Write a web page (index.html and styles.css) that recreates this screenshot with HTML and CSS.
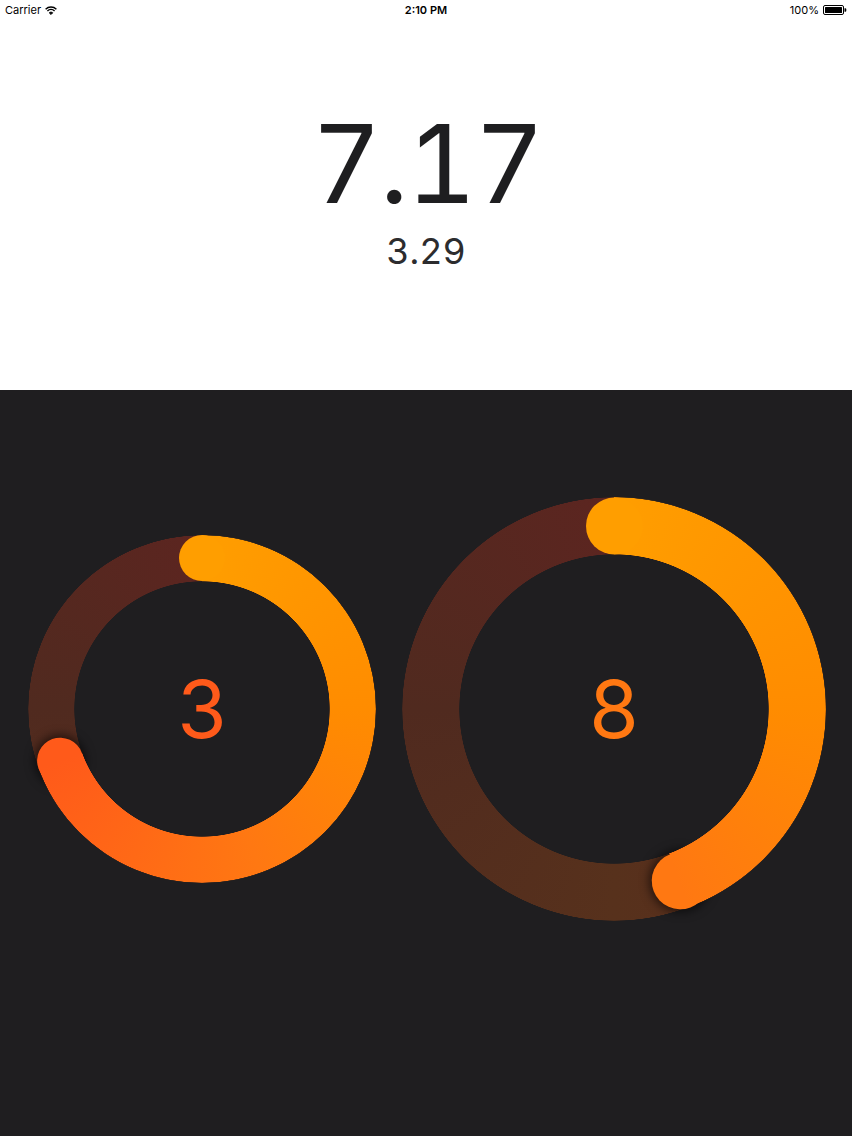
FILE: index.html
```html
<!DOCTYPE html>
<html lang="en">
<head>
    <meta charset="UTF-8">
    <meta name="viewport" content="width=device-width, initial-scale=1.0">
    <title>Gauges</title>
    <link rel="stylesheet" href="styles.css">
</head>
<body>
    <div class="status-bar">
        <div class="status-left">
            <span>Carrier</span>
            <svg class="wifi" width="12" height="9" viewBox="0 0 12 9">
                <path d="M0.6 3.2 A7.8 7.8 0 0 1 11.4 3.2" fill="none" stroke="#000" stroke-width="1.4"/>
                <path d="M2.4 5 A5.2 5.2 0 0 1 9.6 5" fill="none" stroke="#000" stroke-width="1.4"/>
                <path d="M4.2 6.8 A2.6 2.6 0 0 1 7.8 6.8 L6 8.6 Z" fill="#000" stroke="#000" stroke-width="0.8"/>
            </svg>
        </div>
        <div class="status-time">2:10 PM</div>
        <div class="status-right">
            <span>100%</span>
            <svg class="battery" width="24" height="10" viewBox="0 0 24 10">
                <rect x="0.5" y="0.5" width="20" height="9" rx="1.5" fill="none" stroke="#000" stroke-width="1"/>
                <rect x="2" y="2" width="17" height="6" rx="0.5" fill="#000"/>
                <path d="M21.5 3.2 h0.8 a1 1 0 0 1 1 1 v1.6 a1 1 0 0 1 -1 1 h-0.8 Z" fill="#000"/>
            </svg>
        </div>
    </div>

    <section class="reading">
        <div class="reading-main">7.17</div>
        <div class="reading-sub">3.29</div>
    </section>

    <section class="gauges">
        <div class="ring ring-small" style="--angle: 250deg; --end: #ff5a1a;">
            <div class="ring-track"></div>
            <div class="ring-cap ring-cap-end"></div>
            <div class="ring-arc"></div>
            <div class="ring-cap ring-cap-start"></div>
            <span class="ring-value">3</span>
        </div>
        <div class="ring ring-large" style="--angle: 159deg; --end: #ff7812;">
            <div class="ring-track"></div>
            <div class="ring-cap ring-cap-end"></div>
            <div class="ring-arc"></div>
            <div class="ring-cap ring-cap-start"></div>
            <span class="ring-value">8</span>
        </div>
    </section>
</body>
</html>
```

FILE: styles.css
```css
body {
    margin: 0;
    padding: 0;
    width: 852px;
    height: 1136px;
    overflow: hidden;
    font-family: Inter, "Noto Sans", sans-serif;
    background-color: #1f1e20;
}

/* status bar */
.status-bar {
    height: 20px;
    background-color: #fff;
    display: flex;
    align-items: center;
    justify-content: space-between;
    padding: 0 5px 0 5px;
    font-size: 11px;
    color: #000;
    position: relative;
}

.status-left,
.status-right {
    display: flex;
    align-items: center;
    gap: 4px;
}

.status-time {
    position: absolute;
    left: 0;
    right: 0;
    text-align: center;
    font-weight: 600;
    pointer-events: none;
}

/* big numbers */
.reading {
    height: 370px;
    background-color: #fff;
    box-sizing: border-box;
    padding-top: 90px;
    text-align: center;
    color: #1e1e20;
    font-variant-numeric: tabular-nums;
}

.reading-main {
    font-size: 108px;
    line-height: 108px;
    font-weight: 400;
    letter-spacing: -2px;
    padding-left: 2px;
}

.reading-sub {
    margin-top: 15px;
    font-size: 36px;
    line-height: 36px;
    font-weight: 400;
    color: #2c2c2e;
}

/* rings */
.gauges {
    display: flex;
    align-items: center;
    gap: 26px;
    padding: 107px 26px 0 28px;
}

.ring {
    position: relative;
    width: var(--size);
    height: var(--size);
    flex-shrink: 0;
    display: flex;
    align-items: center;
    justify-content: center;
}

.ring-small {
    --size: 348px;
    --thick: 46px;
}

.ring-large {
    --size: 424px;
    --thick: 57px;
}

.ring-track,
.ring-arc {
    position: absolute;
    inset: 0;
    border-radius: 50%;
    -webkit-mask: radial-gradient(farthest-side, transparent calc(100% - var(--thick) - 0.6px), #000 calc(100% - var(--thick)), #000 calc(100% - 0.6px), transparent 100%);
    mask: radial-gradient(farthest-side, transparent calc(100% - var(--thick) - 0.6px), #000 calc(100% - var(--thick)), #000 calc(100% - 0.6px), transparent 100%);
}

.ring-track {
    background: conic-gradient(#5c2520 0deg, #5a2a1e 90deg, #57311c 180deg, #502a1f 270deg, #5c2520 360deg);
}

.ring-arc {
    background: conic-gradient(#ff9e00 0deg, #ff8c00 90deg, #ff7812 160deg, #ff5a1a 250deg, #ff4a1e 360deg);
    -webkit-mask:
        radial-gradient(farthest-side, transparent calc(100% - var(--thick) - 0.6px), #000 calc(100% - var(--thick)), #000 calc(100% - 0.6px), transparent 100%),
        conic-gradient(#000 var(--angle), transparent 0);
    -webkit-mask-composite: source-in;
    mask:
        radial-gradient(farthest-side, transparent calc(100% - var(--thick) - 0.6px), #000 calc(100% - var(--thick)), #000 calc(100% - 0.6px), transparent 100%),
        conic-gradient(#000 var(--angle), transparent 0);
    mask-composite: intersect;
}

.ring-cap {
    position: absolute;
    left: 50%;
    top: 50%;
    width: var(--thick);
    height: var(--thick);
    margin-left: calc(var(--thick) / -2);
    margin-top: calc(var(--thick) / -2);
    border-radius: 50%;
}

.ring-cap-start {
    background-color: #ff9e00;
    transform: translateY(calc(var(--size) / -2 + var(--thick) / 2));
}

.ring-cap-end {
    background-color: var(--end);
    box-shadow: 0 0 10px 3px rgba(0, 0, 0, 0.55);
    transform: rotate(var(--angle)) translateY(calc(var(--size) / -2 + var(--thick) / 2));
}

.ring-value {
    position: relative;
    font-size: 80px;
    line-height: 80px;
    font-weight: 400;
    color: var(--end);
}
```
